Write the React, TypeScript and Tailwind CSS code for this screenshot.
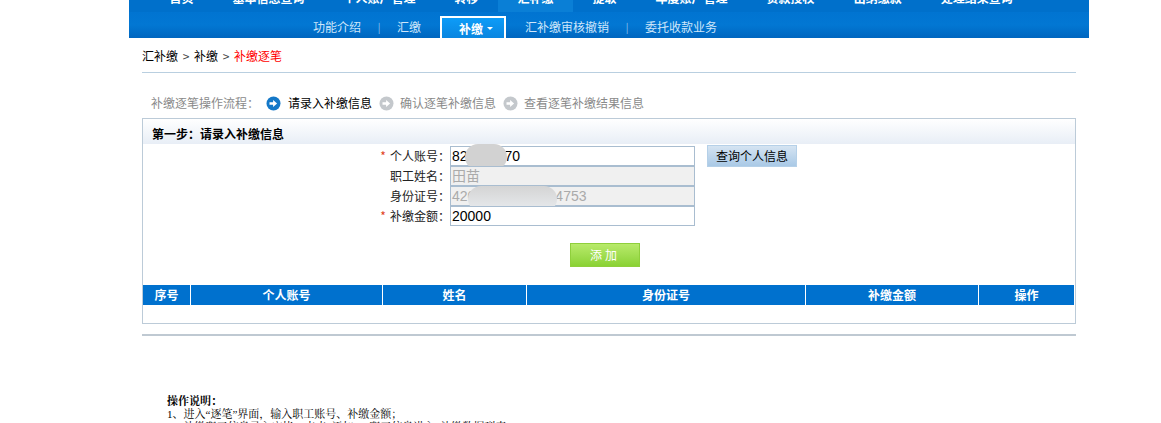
const font = { fontFamily: '"Noto Sans CJK SC", "Liberation Sans", sans-serif' };

const topNav = [
  { label: '首页' },
  { label: '基本信息查询' },
  { label: '个人账户管理' },
  { label: '转移' },
  { label: '汇补缴', active: true },
  { label: '提取' },
  { label: '年度账户管理' },
  { label: '贷款授权' },
  { label: '出纳缴款' },
  { label: '处理结果查询' },
];

const columns = [
  { label: '序号', w: 'w-[48px]' },
  { label: '个人账号', w: 'w-[192px]' },
  { label: '姓名', w: 'w-[144px]' },
  { label: '身份证号', w: 'w-[279px]' },
  { label: '补缴金额', w: 'w-[173px]' },
  { label: '操作', w: 'flex-1' },
];

function Arrow({ active }: { active?: boolean }) {
  return (
    <svg width="15" height="15" viewBox="0 0 15 15" className="shrink-0">
      <circle cx="7.5" cy="7.5" r="7" fill={active ? '#1478c8' : '#c4c8cc'} />
      <path d="M3.5 6.3h3.6V4l4 3.5-4 3.5V8.7H3.5z" fill="#fff" />
    </svg>
  );
}

function Field({ label, required, value, tail, disabled, children }: { label: string; required?: boolean; value: string; tail?: React.ReactNode; disabled?: boolean; children?: React.ReactNode }) {
  return (
    <div className="flex h-5 items-center">
      <div className="w-[307px] text-right text-[12px] leading-5 text-[#222]">
        {required && <span className="mr-1 text-[#e0421b]">*</span>}
        {label}：
      </div>
      <div className={`relative h-5 w-[245px] border border-[#a9bdd0] pl-[1px] text-[14px] leading-[18px] ${disabled ? 'bg-[#f0f0f0] text-[#aaa]' : 'bg-white text-black'}`} style={{ fontFamily: '"Liberation Sans", "Noto Sans CJK SC", sans-serif' }}>
        {value}
        {tail}
        {children}
      </div>
    </div>
  );
}

export default function App() {
  return (
    <div className="h-[423px] w-[1161px] overflow-hidden bg-white" style={font}>
      <div className="ml-[129px] w-[960px]">
        <header className="h-[38px] overflow-hidden bg-[#0070cb]">
          <div className="flex h-[12px] pl-[21px]">
            {topNav.map((item) => (
              <div key={item.label} className={`h-[12px] shrink-0 overflow-hidden px-[19.5px] ${item.active ? 'bg-[#0a7fd6]' : ''}`}>
                <span className="-mt-[12px] block text-[12px] leading-[20px] font-bold whitespace-nowrap text-white">{item.label}</span>
              </div>
            ))}
          </div>
          <div className="flex h-[26px] items-end bg-gradient-to-b from-[#0174d1] via-[#0277d3] to-[#0066bf] pl-[184px] text-[12px] text-[#cfe6fa]">
            <div className="flex h-[26px] items-center pt-[3px] leading-none">
              <span>功能介绍</span>
              <span className="w-[36px] text-center text-[10px] text-[#8fc4ee]">|</span>
              <span>汇缴</span>
            </div>
            <div className="ml-[19px] flex h-[22px] w-[66px] items-center justify-center gap-1 border-x-2 border-t-2 border-white bg-gradient-to-b from-[#0d9cf8] to-[#0a86e0] pt-[1px] pl-[6px] text-[12px] font-bold text-white">
              补缴
              <span className="h-0 w-0 border-x-[3px] border-t-[3px] border-x-transparent border-t-white" />
            </div>
            <div className="ml-[19px] flex h-[26px] items-center pt-[3px] leading-none">
              <span>汇补缴审核撤销</span>
              <span className="w-[36px] text-center text-[10px] text-[#8fc4ee]">|</span>
              <span>委托收款业务</span>
            </div>
          </div>
        </header>
      </div>

      <div className="ml-[142px] w-[934px]">
        <div className="flex h-[35px] items-center gap-[4px] border-b border-[#b9cfe0] pt-[2px] text-[12px] text-black">
          <span>汇补缴</span>
          <span className="w-[8px] text-center text-[#444]">&gt;</span>
          <span>补缴</span>
          <span className="w-[8px] text-center text-[#444]">&gt;</span>
          <span className="text-[#f00]">补缴逐笔</span>
        </div>

        <div className="mt-[20px] flex h-[20px] items-center pl-[9px] text-[12px] text-[#8a8a8a]">
          <span className="w-[115px]">补缴逐笔操作流程：</span>
          <Arrow active />
          <span className="ml-[7px] text-black">请录入补缴信息</span>
          <span className="ml-[7px]"><Arrow /></span>
          <span className="ml-[6px]">确认逐笔补缴信息</span>
          <span className="ml-[7px]"><Arrow /></span>
          <span className="ml-[6px]">查看逐笔补缴结果信息</span>
        </div>

        <section className="mt-[5px] h-[206px] border border-[#bccbd8]">
          <div className="flex h-[25px] items-end bg-gradient-to-b from-white to-[#e8eef6] pb-[1px] pl-[9px] text-[12px] leading-[18px] font-bold text-black">
            第一步：请录入补缴信息
          </div>
          <div className="flex items-start pt-[2px]">
            <div className="flex flex-col">
              <Field label="个人账号" required value="82" tail={<span className="ml-[37px]">70</span>}>
                <div className="absolute -top-[3px] left-[14px] h-[26px] w-[42px] rounded-full bg-[#d2d2d2]" />
              </Field>
              <Field label="职工姓名" disabled value="田苗" />
              <Field label="身份证号" disabled value="420" tail={<span className="ml-[80px]">4753</span>}>
                <div className="absolute -top-[1px] left-[17px] h-[26px] w-[89px] rounded-full bg-gradient-to-b from-[#d4d4d4] to-[#e9ecef]" />
              </Field>
              <Field label="补缴金额" required value="20000" />
            </div>
            <button className="-mt-[1px] ml-[12px] h-[22px] w-[90px] border border-[#b5d0e8] bg-gradient-to-b from-[#d5e4f2] to-[#a9c9e6] text-[12px] text-black">查询个人信息</button>
          </div>
          <div className="mt-[17px] flex justify-center pr-[8px]">
            <button className="h-[24px] w-[70px] border border-[#8fcf3c] bg-gradient-to-b from-[#b8ea6a] to-[#8ad233] text-[12px] tracking-[3px] text-white">添加</button>
          </div>
          <div className="mt-[18px] flex h-[20px] pr-[1px] text-[12px] font-bold text-white">
            {columns.map((col) => (
              <div key={col.label} className={`flex items-center justify-center border-r border-white bg-[#0071ce] last:border-r-0 ${col.w}`}>{col.label}</div>
            ))}
          </div>
        </section>

        <div className="mt-[10px] h-[2px] bg-[#bfc9d2]" />

        <div className="mt-[59px] pl-[25px] text-[11px] leading-[13px] text-black" style={{ fontFamily: '"Liberation Serif", "Noto Serif CJK SC", "Noto Sans CJK SC", serif' }}>
          <div className="font-bold">操作说明：</div>
          <div>1、进入“逐笔”界面，输入职工账号、补缴金额；</div>
          <div>2、补缴职工信息录入完毕，点击“添加”，职工信息进入“补缴数据列表”；</div>
        </div>
      </div>
    </div>
  );
}
